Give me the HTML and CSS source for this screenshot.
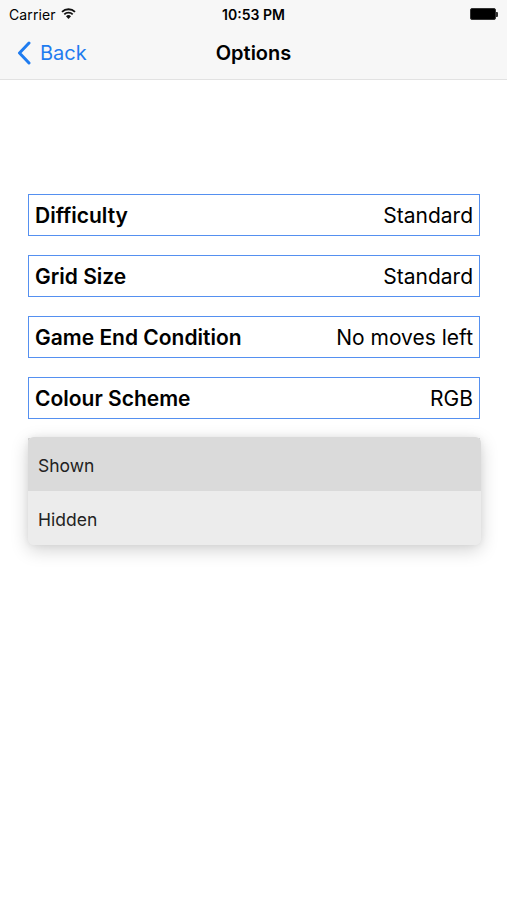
FILE: index.html
```html
<!DOCTYPE html>
<html>
<head>
<meta charset="utf-8">
<link rel="stylesheet" href="styles.css">
</head>
<body>
<header class="top">
  <div class="status">
    <div class="carrier">Carrier
      <svg class="wifi" width="15" height="11" viewBox="0 0 15 11"><path d="M7.5 11 L5 8.2 A3.6 3.6 0 0 1 10 8.2 Z" fill="#111"/><path d="M3.3 6.4 A6 6 0 0 1 11.7 6.4" stroke="#111" stroke-width="1.8" fill="none"/><path d="M1 3.9 A9.3 9.3 0 0 1 14 3.9" stroke="#111" stroke-width="1.8" fill="none"/></svg>
    </div>
    <div class="time">10:53 PM</div>
    <div class="battery"><span class="cell"></span><span class="nub"></span></div>
  </div>
  <nav class="nav">
    <div class="back">
      <svg width="14" height="24" viewBox="0 0 14 24"><path d="M12 2 L2.5 12 L12 22" stroke="#1f7cf0" stroke-width="3" fill="none" stroke-linecap="round" stroke-linejoin="round"/></svg>
      <span>Back</span>
    </div>
    <div class="title">Options</div>
  </nav>
</header>
<main class="options">
  <div class="row"><span class="label">Difficulty</span><span class="value">Standard</span></div>
  <div class="row"><span class="label">Grid Size</span><span class="value">Standard</span></div>
  <div class="row"><span class="label">Game End Condition</span><span class="value">No moves left</span></div>
  <div class="row"><span class="label">Colour Scheme</span><span class="value">RGB</span></div>
  <div class="menu-anchor">
    <div class="row hidden-row"></div>
    <ul class="menu">
      <li class="item selected">Shown</li>
      <li class="item">Hidden</li>
    </ul>
  </div>
</main>
</body>
</html>
```
FILE: styles.css
```css
* { box-sizing: border-box; }
html, body { margin: 0; padding: 0; background: #fff; }
body { font-family: "Inter", "Liberation Sans", sans-serif; color: #000; width: 507px; height: 900px; overflow: hidden; }
.top { background: #f7f7f7; border-bottom: 1px solid #e2e2e2; height: 80px; }
.status { height: 28px; display: flex; align-items: center; justify-content: space-between; padding: 0 9px 0 9px; position: relative; }
.carrier { font-size: 14px; display: flex; align-items: center; gap: 5px; letter-spacing: 0.1px; }
.wifi { margin-top: -2px; }
.time { font-size: 14px; font-weight: 600; position: absolute; left: 0; right: 0; text-align: center; pointer-events: none; }
.battery { display: flex; align-items: center; }
.cell { width: 26px; height: 12px; background: #000; border-radius: 2px; border: 1px solid #333; }
.nub { width: 2px; height: 5px; background: #333; border-radius: 0 1px 1px 0; }
.nav { height: 51px; display: flex; align-items: center; position: relative; padding-left: 17px; }
.back { display: flex; align-items: center; gap: 9px; color: #1f7cf0; font-size: 20px; margin-top: -2px; }
.title { position: absolute; left: 0; right: 0; text-align: center; font-size: 20px; font-weight: 600; margin-top: -2px; }
.options { padding: 114px 27px 0 28px; display: flex; flex-direction: column; gap: 19px; }
.row { height: 42px; border: 1.5px solid #5590f0; display: flex; align-items: center; justify-content: space-between; padding: 0 6px 0 6px; font-size: 21px; }
.label { font-weight: 600; }
.value { font-weight: 400; }
.menu-anchor { position: relative; height: 42px; }
.hidden-row { border-color: #dcdcdc; }
.menu { position: absolute; left: 0; right: -1px; top: -1px; margin: 0; padding: 0; list-style: none; border-radius: 6px; overflow: hidden; box-shadow: 0 5px 18px rgba(0,0,0,0.18), 0 0 6px rgba(0,0,0,0.06); background: #ececec; }
.item { height: 54px; display: flex; align-items: center; padding: 3px 0 0 10px; font-size: 17.5px; color: #222; background: #ececec; }
.item.selected { background: #dadada; }
```
